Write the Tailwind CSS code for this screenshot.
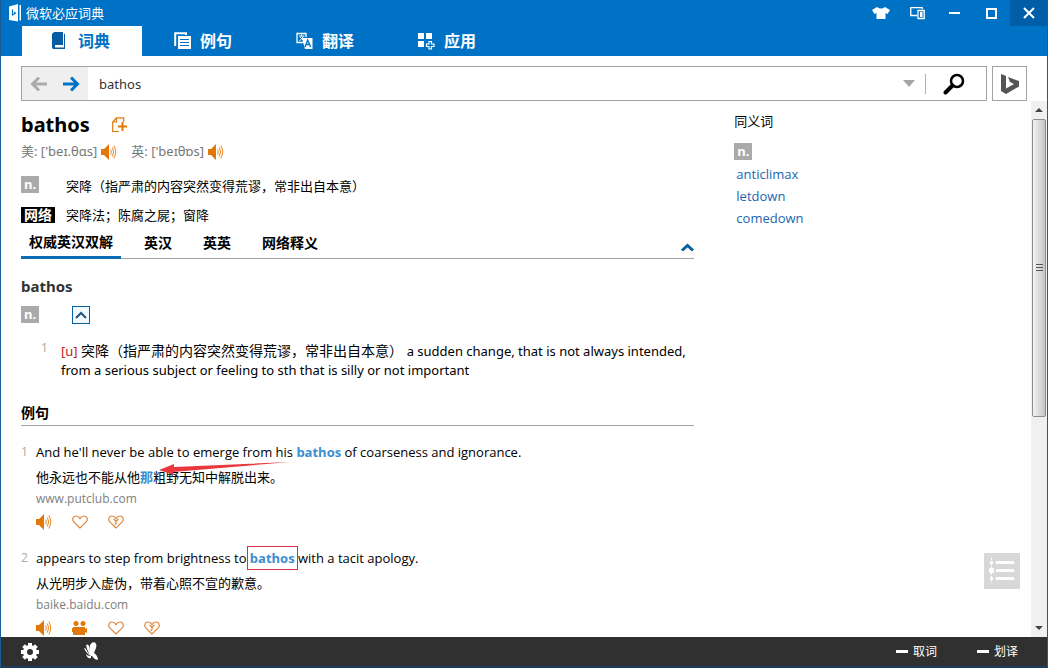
<!DOCTYPE html>
<html lang="zh-CN">
<head>
<meta charset="utf-8">
<title>微软必应词典</title>
<script src="https://cdn.jsdelivr.net/npm/@tailwindcss/browser@4"></script>
</head>
<body class="h-screen overflow-hidden bg-white text-black text-[13px] font-['Noto_Sans','Noto_Sans_CJK_SC',sans-serif]">
<svg class="hidden" aria-hidden="true">
  <symbol id="speaker" viewBox="0 0 16 16"><path d="M0 5h3l5-5v16l-5-5H0z" fill="#e0790b"/><path d="M9.500 5.500q1.500 2.500 0 5M11 3.500q3 4.500 0 9M12.700 1.500q4 6.500 0 13" fill="none" stroke="#e8943c" stroke-width="1.100"/></symbol>
  <symbol id="heart" viewBox="0 0 16 14"><path d="M8 13 2 7.200C-.5 4.500 1 1 4 1q2.600 0 4 2.600Q9.400 1 12 1c3 0 4.500 3.500 2 6.200z" fill="none" stroke="#e0863a" stroke-width="1.200"/></symbol>
  <symbol id="broken" viewBox="0 0 16 14"><path d="M8 13 2 7.200C-.5 4.500 1 1 4 1q2.600 0 4 2.600Q9.400 1 12 1c3 0 4.500 3.500 2 6.200z" fill="none" stroke="#e0863a" stroke-width="1.200"/><path d="M5.500 4 8 6.500 10.500 4M8 6.500v2L6.800 10" fill="none" stroke="#e0863a" stroke-width="1.200"/></symbol>
</svg>
<div class="flex h-full flex-col border-x border-b-2 border-[#1a5c94] border-b-[#1b3c5e]">
  <header class="shrink-0 bg-[#0072c6] text-white">
    <div class="flex h-[26px] items-center">
      <svg class="ml-[7px] h-5 w-[14px]" viewBox="0 0 14 20"><path d="M1 3.500 10 1v17.500L1 17z" fill="#fff"/><path d="M11.500 2h1.500v15.500h-1.500z" fill="#fff"/><path d="M4.500 6.500v5.500l3-1.700L6 9.200" stroke="#0072c6" stroke-width="1.200" fill="none"/></svg>
      <span class="ml-1 leading-5">微软必应词典</span>
      <div class="ml-auto flex h-full items-center">
        <button aria-label="皮肤" class="flex w-[37px] justify-center"><svg class="h-3 w-[18px]" viewBox="0 0 18 12"><path d="M5 0q4 3 8 0l5 3-2.500 4-2-1v6h-9V6l-2 1L0 3z" fill="#fff"/></svg></button>
        <button aria-label="迷你窗口" class="flex w-[37px] justify-center"><svg class="h-[14px] w-4" viewBox="0 0 16 14"><path d="M7 9.500H.75V1.700h11.500V3M8 4.500h6.200v8H8z" stroke="#fff" stroke-width="1.300" fill="none"/><path d="M10 6h2.500v5H10z" fill="#fff"/></svg></button>
        <button aria-label="最小化" class="flex w-[37px] justify-center"><span class="h-[2px] w-[11px] bg-white"></span></button>
        <button aria-label="最大化" class="flex w-[37px] justify-center"><span class="size-[11px] border-2 border-white"></span></button>
        <button aria-label="关闭" class="flex h-full w-[37px] items-center justify-center bg-[#005da8]"><svg class="size-3" viewBox="0 0 12 12"><path d="m1 1 10 10M11 1 1 11" stroke="#fff" stroke-width="2"/></svg></button>
      </div>
    </div>
    <nav class="ml-[21px] flex h-[30px] gap-[2px] text-[16px] font-bold">
      <button class="flex w-[120px] items-center gap-2 bg-white pl-[30px] text-[#0072c6]">
        <svg class="size-[18px]" viewBox="0 0 18 18"><path d="M2 0h9v13H3v2.500h9V2l1-.5V17H1L0 15.500V2z" fill="#075da4"/></svg>词典</button>
      <button class="flex w-[120px] items-center gap-2 pl-[30px]">
        <svg class="size-[18px]" viewBox="0 0 18 18"><path d="M1.200 14V1.200H12V3" fill="none" stroke="#fff" stroke-width="2"/><path d="M4 4h13v13H4z" fill="#fff"/><path d="M6 7.500h9M6 10.500h9M6 13.500h9" stroke="#0072c6" stroke-width="1.200"/></svg>例句</button>
      <button class="flex w-[120px] items-center gap-2 pl-[30px]">
        <svg class="size-[18px]" viewBox="0 0 18 18"><path d="M8 10.500H1V1.500h9V5" fill="none" stroke="#fff" stroke-width="1.300"/><path d="M3 4h5.500M5.500 2.500V4M3.500 9l4-4.500M4 5l4 4" fill="none" stroke="#fff"/><path d="M6 6h10.500v11H9z" fill="#fff"/><path d="m9 15 2.700-7 3 7M10 12.500h3.500" fill="none" stroke="#0072c6" stroke-width="1.400"/></svg>翻译</button>
      <button class="flex w-[120px] items-center gap-2 pl-[30px]">
        <svg class="size-[18px]" viewBox="0 0 18 18"><path d="M0 1h6v6H0zM8 1h6v6H8zM0 9h6v6H0z" fill="#fff"/><path d="M11 9.500h2.500V12H16v2.500h-2.500V17H11v-2.500H8.500V12H11z" fill="none" stroke="#fff" stroke-width="1.200"/></svg>应用</button>
    </nav>
  </header>

  <form class="mt-[10px] mr-5 ml-5 flex h-[35px] shrink-0 gap-[5px]" onsubmit="return false">
    <div class="flex flex-1 items-center border border-[#a3a3a3]">
      <div class="flex h-full w-[66px] items-center gap-[14px] bg-[#efefef] pl-2">
        <button type="button" aria-label="后退"><svg class="size-[18px]" viewBox="0 0 18 18"><path d="M17 9H2.500M9 2.500 2.500 9 9 15.500" stroke="#ababab" stroke-width="3" fill="none"/></svg></button>
        <button type="button" aria-label="前进"><svg class="size-[18px]" viewBox="0 0 18 18"><path d="M1 9h14.500M9 2.500 15.500 9 9 15.500" stroke="#0072c6" stroke-width="3" fill="none"/></svg></button>
      </div>
      <input aria-label="搜索" value="bathos" class="h-full min-w-0 flex-1 px-[11px] text-[13px] text-[#333] outline-none">
      <button type="button" aria-label="历史" class="mr-[10px] border-x-[6px] border-t-[7px] border-x-transparent border-t-[#a5a5a5]"></button>
      <span class="h-5 w-px bg-[#b0b0b0]"></span>
      <button aria-label="查找" class="flex w-[60px] pl-[17px]"><svg class="size-[22px]" viewBox="0 0 22 22"><circle cx="14" cy="8" r="6" stroke="#000" stroke-width="2.500" fill="none"/><path d="m9.500 12.500-7 7" stroke="#000" stroke-width="4" stroke-linecap="round"/></svg></button>
    </div>
    <button type="button" aria-label="必应" class="flex w-[35px] items-center justify-center border border-[#a3a3a3]"><svg class="h-5 w-[18px]" viewBox="0 0 18 20"><path d="m0 0 5 2v12.500l8-4.500-4-2-2-5 11 4v5.500L5 20l-5-3z" fill="#555"/></svg></button>
  </form>

  <div class="relative flex min-h-0 flex-1">
    <main class="flex min-w-0 flex-1 overflow-hidden pl-5">
      <article class="w-2/3 shrink-0 pt-[10px]">
        <div class="flex h-7 items-center gap-[22px]">
          <h1 class="text-[20px] leading-7 font-bold">bathos</h1>
          <button aria-label="添加到生词本"><svg class="size-4" viewBox="0 0 16 16"><path d="M7 14.500H.7V5L4.500.8h7.200V5M4.500 1v4H1" stroke="#e0790b" stroke-width="1.200" fill="none"/><path d="M10.500 5v9M6 9.500h9" stroke="#e0790b" stroke-width="2"/></svg></button>
        </div>
        <div class="mt-[3px] flex h-5 items-center gap-1 text-[#777]">
          <span>美: ['beɪ.θɑs]</span><button aria-label="美音"><svg class="size-4"><use href="#speaker"/></svg></button>
          <span class="ml-[10px]">英: ['beɪθɒs]</span><button aria-label="英音"><svg class="size-4"><use href="#speaker"/></svg></button>
        </div>
        <div class="mt-[14px] flex h-5">
          <div class="w-[45px]"><span class="block h-[17px] w-[18px] bg-[#aaa] text-center leading-[17px] font-bold text-white">n.</span></div>
          <p class="leading-5">突降（指严肃的内容突然变得荒谬，常非出自本意）</p>
        </div>
        <div class="mt-[9px] flex h-5 items-center">
          <div class="w-[45px]"><span class="block h-4 w-[34px] bg-black text-center text-[14px] leading-4 font-bold text-white">网络</span></div>
          <p class="leading-5">突降法；陈腐之屍；窗降</p>
        </div>
        <div class="mt-[2px] flex h-8 gap-[15px] border-b border-[#a3a3a3] text-[14px] font-bold">
          <button class="-mb-px border-b-3 border-[#0a6cb5] px-2 leading-7">权威英汉双解</button>
          <button class="px-2 leading-6">英汉</button>
          <button class="px-2 leading-6">英英</button>
          <button class="px-2 leading-6">网络释义</button>
          <button aria-label="收起" class="ml-auto pt-[9px]"><svg class="h-[9px] w-[13px]" viewBox="0 0 13 9"><path d="m1 7.500 5.500-5 5.500 5" stroke="#0a5f9f" stroke-width="3" fill="none"/></svg></button>
        </div>
        <h2 class="mt-[15px] text-[15px] leading-6 font-bold text-[#333]">bathos</h2>
        <div class="mt-2 flex h-[18px] gap-[33px]">
          <span class="block h-[17px] w-[18px] bg-[#aaa] text-center leading-[17px] font-bold text-white">n.</span>
          <button aria-label="收起释义" class="flex size-[18px] items-center justify-center border border-[#0a5f9f] bg-[#eefaff]"><svg class="h-2 w-3" viewBox="0 0 12 8"><path d="m1 7 5-5 5 5" stroke="#2a4f74" stroke-width="2" fill="none"/></svg></button>
        </div>
        <div class="mt-[17px] flex leading-[19px]">
          <span class="-mt-[3px] w-10 shrink-0 pl-5 text-[12px] text-[#aaa]">1</span>
          <p><span class="text-[#c02020]">[u]</span> <span class="text-[14px]">突降（指严肃的内容突然变得荒谬，常非出自本意） </span>a sudden change, that is not always intended, from a serious subject or feeling to sth that is silly or not important</p>
        </div>
        <h3 class="mt-[18px] border-b border-[#a3a3a3] pt-[3px] leading-6 font-bold text-[14px]">例句</h3>
        <ol class="font-['Open_Sans','Noto_Sans_CJK_SC',sans-serif]">
          <li class="mt-[14px] flex h-[92px]">
            <span class="w-[15px] shrink-0 text-[12px] leading-6 font-medium text-[#aaa]">1</span>
            <div>
              <p class="leading-6">And he'll never be able to emerge from his <b class="text-[#3b8ed0]">bathos</b> of coarseness and ignorance.</p>
              <p class="leading-[26px]">他永远也不能从他<b class="text-[#3b8ed0]">那</b>粗野无知中解脱出来。</p>
              <p class="text-[12px] leading-[18px] text-[#808080]">www.putclub.com</p>
              <div class="mt-[6px] flex h-4 items-center gap-5">
                <button aria-label="朗读"><svg class="size-4"><use href="#speaker"/></svg></button>
                <button aria-label="喜欢"><svg class="h-[14px] w-4"><use href="#heart"/></svg></button>
                <button aria-label="不喜欢"><svg class="h-[14px] w-4"><use href="#broken"/></svg></button>
              </div>
            </div>
          </li>
          <li class="mt-[14px] flex h-[92px]">
            <span class="w-[15px] shrink-0 text-[12px] leading-6 font-medium text-[#aaa]">2</span>
            <div>
              <p class="leading-6">appears to step from brightness to <b class="relative text-[#3b8ed0]">bathos<span class="absolute -inset-x-[3px] -inset-y-[3px] border border-[#d8324a]"></span></b> with a tacit apology.</p>
              <p class="leading-[26px]">从光明步入虚伪，带着心照不宣的歉意。</p>
              <p class="text-[12px] leading-[18px] text-[#808080]">baike.baidu.com</p>
              <div class="mt-[6px] flex h-4 items-center gap-5">
                <button aria-label="朗读"><svg class="size-4"><use href="#speaker"/></svg></button>
                <button aria-label="视频"><svg class="size-4" viewBox="0 0 16 16"><circle cx="4" cy="3.500" r="2.500" fill="#e0790b"/><circle cx="11" cy="3.500" r="2.500" fill="#e0790b"/><path d="M1 7h12v2l2-1v5l-2-1v3H1v-3H0V8h1z" fill="#e0790b"/></svg></button>
                <button aria-label="喜欢"><svg class="h-[14px] w-4"><use href="#heart"/></svg></button>
                <button aria-label="不喜欢"><svg class="h-[14px] w-4"><use href="#broken"/></svg></button>
              </div>
            </div>
          </li>
        </ol>
      </article>
      <aside class="pt-[10px] pl-10">
        <h2 class="leading-5">同义词</h2>
        <span class="mt-3 block h-[17px] w-[18px] bg-[#aaa] text-center leading-[17px] font-bold text-white">n.</span>
        <ul class="mt-[3px] pl-[2px] leading-[22px] text-[#1b66b0] font-['Open_Sans',sans-serif]">
          <li><a href="#">anticlimax</a></li>
          <li><a href="#">letdown</a></li>
          <li><a href="#">comedown</a></li>
        </ul>
      </aside>
    </main>
    <div class="flex w-4 flex-col items-center bg-[#f0f0f0]">
      <button aria-label="向上" class="flex h-[18px] shrink-0 items-center"><span class="border-x-4 border-b-4 border-x-transparent border-b-[#444]"></span></button>
      <div class="flex w-[14px] flex-[297] flex-col items-center justify-center gap-[2px] rounded-xs border border-[#8c8c8c] bg-linear-to-r from-[#f4f4f4] to-[#c4c4c8]">
        <span class="h-px w-[7px] bg-[#555]"></span><span class="h-px w-[7px] bg-[#555]"></span><span class="h-px w-[7px] bg-[#555]"></span>
      </div>
      <div class="flex-[203]"></div>
      <button aria-label="向下" class="flex h-[18px] shrink-0 items-center"><span class="border-x-4 border-t-4 border-x-transparent border-t-[#444]"></span></button>
    </div>
    <svg class="absolute top-[359px] left-[157px] h-[18px] w-[136px]" viewBox="0 0 136 18"><path d="M132 2 16 7V4L1 10l15 5-1-3z" fill="#e8383d"/></svg>
    <button aria-label="目录" class="absolute right-[27px] bottom-12 size-9 bg-[#d8d8d8]"><svg class="size-9" viewBox="0 0 36 36"><path d="M13 9.500h16M13 17.500h16M13 25.500h16" stroke="#fff" stroke-width="3" stroke-linecap="round"/><path d="M7.500 5v25" stroke="#fff" stroke-dasharray="2 1"/><circle cx="7.500" cy="9.500" r="1.800" fill="#fff"/><rect x="5" y="15" width="5" height="5" rx="1" fill="#fff"/><circle cx="7.500" cy="25.500" r="1.800" fill="#fff"/></svg></button>
  </div>

  <footer class="flex h-[29px] shrink-0 items-center bg-[#303030] px-5 text-[12px] text-white">
    <button aria-label="设置"><svg class="size-[18px]" viewBox="0 0 18 18"><circle cx="9" cy="9" r="5" stroke="#fff" stroke-width="4" fill="none"/><path d="M9 0v3M9 15v3M0 9h3M15 9h3M2.600 2.600l2.200 2.200M13.200 13.200l2.200 2.200M15.400 2.600l-2.200 2.200M4.800 13.200l-2.200 2.200" stroke="#fff" stroke-width="4"/></svg></button>
    <button aria-label="MSN" class="ml-[44px]"><svg class="h-[19px] w-4" viewBox="0 0 16 19"><path d="M8.500 14C5.500 8 6 2 9.500.5c3.500-1 4.500 2 3.500 5.500l-2 5q3.500 2 4 6.500-3 1-6-3.500zM8 14Q4.500 10 3 3q2-1.500 3 1 0 5 2.500 10zM8 14q-4.500-2-7-8 2 0 3.500 4zM8 14q-3 .5-5-2 1 5 5 4z" fill="#fff"/></svg></button>
    <button class="ml-auto flex items-center gap-[5px]"><span class="h-[3px] w-3 bg-white"></span>取词</button>
    <button class="mr-[9px] ml-10 flex items-center gap-[5px]"><span class="h-[3px] w-3 bg-white"></span>划译</button>
  </footer>
</div>
</body>
</html>
